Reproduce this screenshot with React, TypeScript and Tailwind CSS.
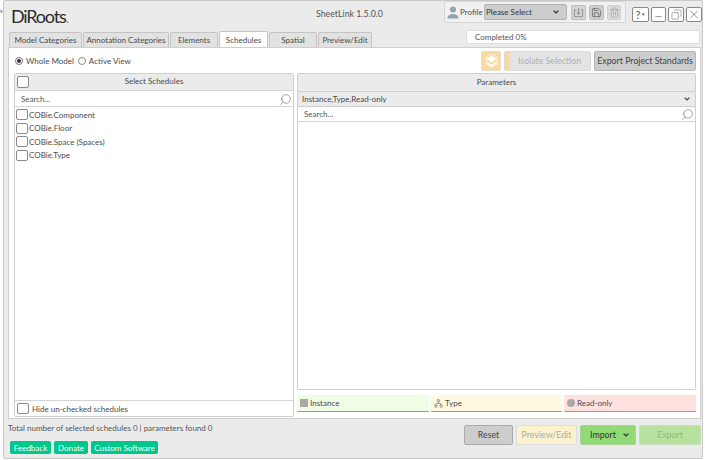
import { ChevronDown, Search, Trash2, Save, X, Minus, Copy, Network } from "lucide-react";

const font = { fontFamily: '"Lato", "Open Sans", sans-serif' };

function Check({ size = "w-3 h-3" }: { size?: string }) {
  return <span className={`${size} shrink-0 rounded-[2px] border border-[#8a8a8a] bg-white`} />;
}

function SearchRow({ className }: { className: string }) {
  return (
    <div className={`flex items-center justify-between border-b border-[#d4d4d4] bg-white pl-[6px] pr-[1px] text-[8px] text-[#555] ${className}`}>
      <span>Search...</span>
      <Search className="w-[13px] h-[13px] -scale-x-100 text-[#555]" strokeWidth={1} />
    </div>
  );
}

const tabs = [
  { name: "Model Categories", w: "w-[73px]" },
  { name: "Annotation Categories", w: "w-[86px]" },
  { name: "Elements", w: "w-[48px]" },
  { name: "Schedules", w: "w-[49px]", active: true },
  { name: "Spatial", w: "w-[48px]" },
  { name: "Preview/Edit", w: "w-[54px]" },
];

const schedules = ["COBie.Component", "COBie.Floor", "COBie.Space (Spaces)", "COBie.Type"];

const links = [
  { name: "Feedback", w: "w-[41px]" },
  { name: "Donate", w: "w-[34px]" },
  { name: "Custom Software", w: "w-[67px]" },
];

export default function App() {
  return (
    <div className="relative w-[705px] h-[460px] bg-white pl-[3px] pr-[2px] pb-[1px] overflow-hidden text-[#4a4a4a]" style={font}>
      <span className="absolute left-0 top-[8px] text-[5px] leading-[6px] text-[#333]">v</span>
      <div className="h-full bg-[#ebebeb] border border-[#c9c9c9] rounded-[2px] pl-[4px] pr-[1px] flex flex-col">
        {/* Header */}
        <div className="h-[30px] flex items-start relative">
          <div className="w-[80px] pt-[4px] pl-[3px] text-[18px] leading-[22px] text-[#2b2b2b] tracking-[-1.2px]">
            DiRoots<span className="text-[#e8a020]">.</span>
          </div>
          <div className="absolute left-[308px] top-[7px] text-[8.8px] leading-[12px] text-[#555]">SheetLink 1.5.0.0</div>
          <div className="ml-auto -mr-px flex items-start">
            <div className="w-[182px] h-[22px] bg-[#f1f1f1] border border-[#d6d6d6] rounded-[2px] flex items-center pl-[2px]">
              <svg viewBox="0 0 12 13" className="w-[12px] h-[13px]">
                <circle cx="6" cy="3.6" r="3" fill="#8fa3b5" />
                <path d="M0.5 12.5c0-3 2-4.6 5.5-4.6s5.500 1.600 5.500 4.600z" fill="#8fa3b5" />
              </svg>
              <span className="text-[8px] w-[25px] pl-[1px]">Profile</span>
              <div className="w-[83px] h-[16px] bg-[#cdcdcd] border border-[#b3b3b3] rounded-[2px] flex items-center justify-between px-[1px] text-[8px] text-[#333]">
                <span>Please Select</span>
                <ChevronDown className="w-[8px] h-[8px] mr-[5px]" strokeWidth={3.500} />
              </div>
              <div className="ml-[4px] flex gap-[3px]">
                <span className="w-[15px] h-[15px] bg-[#d5d5d5] border border-[#bdbdbd] rounded-[2px] flex items-center justify-center">
                  <svg viewBox="0 0 12 12" className="w-[11px] h-[11px]" fill="none" stroke="#777" strokeWidth="0.8">
                    <path d="M3.500 3H1.500V10.500H10.500V3H8.500M6 1V8M4 6L6 8L8 6" />
                  </svg>
                </span>
                <span className="w-[15px] h-[15px] bg-[#d0d0d0] border border-[#bdbdbd] rounded-[2px] flex items-center justify-center"><Save className="w-[11px] h-[11px] text-[#555]" strokeWidth={1.5} /></span>
                <span className="w-[14px] h-[15px] bg-[#dcdcdc] border border-[#cfcfcf] rounded-[2px] flex items-center justify-center"><Trash2 className="w-[11px] h-[11px] text-[#aaa]" strokeWidth={1.8} /></span>
              </div>
            </div>
            <div className="ml-[6px] mt-[6px] flex gap-[2px]">
              <span className="w-[17px] h-[15px] bg-white border border-[#888] rounded-[2px] flex items-center justify-center text-[11px] leading-none text-[#555]">?<span className="text-[5px] ml-[2px]">▾</span></span>
              <span className="w-[15px] h-[15px] bg-white border border-[#888] rounded-[2px] flex items-end justify-center"><Minus className="w-[9px] h-[9px]" strokeWidth={1.5} /></span>
              <span className="w-[16px] h-[15px] bg-white border border-[#888] rounded-[2px] flex items-center justify-center"><Copy className="w-[11px] h-[11px] -scale-x-100" strokeWidth={1} /></span>
              <span className="w-[16px] h-[15px] bg-white border border-[#888] rounded-[2px] flex items-center justify-center"><X className="w-[15px] h-[15px]" strokeWidth={1} /></span>
            </div>
          </div>
        </div>
        {/* Tabs + progress */}
        <div className="h-[16px] flex items-end relative">
          <div className="flex pl-[1px] gap-[1px] items-end">
            {tabs.map((t) => (
              <div
                key={t.name}
                className={`${t.w} rounded-t-[2px] border border-b-0 border-[#c4c4c4] flex items-center justify-center text-[8px] whitespace-nowrap ${
                  t.active ? "h-[16px] bg-white" : "h-[15px] bg-[#e2e2e2]"
                }`}
              >
                {t.name}
              </div>
            ))}
          </div>
          <div className="ml-auto mr-[1px] mb-[3px] w-[234px] h-[14px] bg-white rounded-[2px] border border-[#dedede] pl-[8px] flex items-center text-[8px] text-[#555]">
            Completed 0%
          </div>
        </div>
        {/* Content */}
        <div className="h-[372px] bg-white border border-[#cfcfcf] flex flex-col pl-[5px] pr-[4px]">
          <div className="h-[25px] flex items-center">
            <span className="ml-[1px] w-[8px] h-[8px] rounded-full border border-[#777] flex items-center justify-center mr-[3px]"><span className="w-[4px] h-[4px] rounded-full bg-[#333]" /></span>
            <span className="text-[8px] mr-[4px]">Whole Model</span>
            <span className="w-[8px] h-[8px] rounded-full border border-[#888] mr-[3px]" />
            <span className="text-[8px]">Active View</span>
            <div className="ml-auto flex items-center gap-[3px]">
              <span className="w-[20px] h-[20px] bg-[#f9d9a0] border border-[#e8e0c8] rounded-[2px] flex items-center justify-center">
                <svg viewBox="0 0 16 16" className="w-[15px] h-[15px]">
                  <path d="M8 1 14 4.500V11.500L8 15 2 11.500V4.500Z" fill="none" stroke="#fff" strokeWidth="0.8" />
                  <path d="M8 3 13.500 6.500 8 10 2.500 6.500Z" fill="#fff" />
                  <path d="M2.500 9 8 12.500 13.500 9V11L8 14.500 2.500 11Z" fill="#fff" />
                </svg>
              </span>
              <div className="w-[87px] h-[20px] bg-[#e4e4e4] border border-[#dadada] rounded-[2px] flex items-center text-[8.800px] text-[#b0b0b0] whitespace-nowrap">
                <span className="w-[5px] h-full bg-[#f9d9a0] mr-[8px]" />
                Isolate Selection
              </div>
              <div className="w-[102px] h-[20px] bg-[#cdcdcd] border border-[#b5b5b5] rounded-[2px] flex items-center justify-center text-[8.800px] text-[#444] whitespace-nowrap">
                Export Project Standards
              </div>
            </div>
          </div>
          <div className="h-[345px] flex gap-[3px]">
            {/* Left panel */}
            <div className="w-[280px] h-[344px] border border-[#cfcfcf] rounded-[2px] flex flex-col">
              <div className="h-[17px] pb-[2px] bg-[#ebebeb] border-b border-[#d4d4d4] relative flex items-center justify-center text-[8px]">
                <span className="absolute left-[2px] top-[2px]"><Check size="w-[12px] h-[12px] block" /></span>
                Select Schedules
              </div>
              <SearchRow className="h-[16px] pt-[1px]" />
              <div className="flex-1 bg-white pt-[1px] pl-[1px]">
                {schedules.map((s) => (
                  <div key={s} className="h-[13.500px] flex items-center gap-[1px] text-[8px]">
                    <Check size="w-[12px] h-[11px]" />
                    {s}
                  </div>
                ))}
              </div>
              <div className="h-[16px] border-t border-[#d4d4d4] flex items-center pl-[2px] gap-[3px] text-[8px]">
                <Check size="w-[12px] h-[11px]" />
                Hide un-checked schedules
              </div>
            </div>
            {/* Right panel */}
            <div className="flex-1 flex flex-col">
              <div className="h-[19px] pb-[2px] bg-[#ebebeb] border border-[#cfcfcf] rounded-t-[2px] flex items-center justify-center text-[8px]">Parameters</div>
              <div className="h-[15px] bg-[#ebebeb] border-x border-b border-[#cfcfcf] flex items-center justify-between pl-[4px] pr-[4px] text-[8px]">
                <span>Instance,Type,Read-only</span>
                <ChevronDown className="w-[8px] h-[8px]" strokeWidth={3.500} />
              </div>
              <SearchRow className="h-[15px] border-x border-x-[#cfcfcf]" />
              <div className="h-[268px] bg-white border-x border-b border-[#cfcfcf] rounded-b-[2px]" />
              <div className="mt-[5px] flex gap-[2px] h-[17px]">
                <div className="w-[132px] bg-[#f0fde4] border-b border-[#999] rounded-[1px] flex items-center pl-[3px] gap-[2px] text-[8px]">
                  <span className="w-[8px] h-[8px] bg-[#a8a8a8]" />
                  Instance
                </div>
                <div className="w-[131px] bg-[#fff9e0] border-b border-[#999] rounded-[1px] flex items-center pl-[3px] gap-[2px] text-[8px]">
                  <Network className="w-[9px] h-[9px] text-[#888]" strokeWidth={2} />
                  Type
                </div>
                <div className="flex-1 bg-[#ffe2df] border-b border-[#999] rounded-[1px] flex items-center pl-[3px] gap-[2px] text-[8px]">
                  <span className="w-[8px] h-[8px] rounded-full bg-[#a8a8a8]" />
                  Read-only
                </div>
              </div>
            </div>
          </div>
        </div>
        {/* Footer */}
        <div className="flex-1 flex justify-between">
          <div>
            <div className="pt-[3px] text-[8px] leading-[12px] text-[#555]">Total number of selected schedules 0 | parameters found 0</div>
            <div className="mt-[7px] ml-[2px] flex gap-[3px]">
              {links.map((b) => (
                <span key={b.name} className={`${b.w} h-[13px] bg-[#00c78c] rounded-[2px] flex items-center justify-center text-[8px] text-white whitespace-nowrap`}>{b.name}</span>
              ))}
            </div>
          </div>
          <div className="pt-[6px] flex items-start gap-[3px]">
            <span className="w-[49px] h-[20px] bg-[#cdcdcd] border border-[#aaa] rounded-[2px] flex items-center justify-center text-[8.800px] text-[#444]">Reset</span>
            <span className="w-[61px] h-[20px] bg-[#fbf2cf] border border-[#ddd] rounded-[2px] flex items-center justify-center text-[8.800px] text-[#aaa]">Preview/Edit</span>
            <span className="w-[56px] h-[20px] bg-[#92d977] border border-[#a5d494] rounded-[2px] flex items-center justify-center gap-[6px] pl-[4px] text-[8.800px] text-[#333]">Import<ChevronDown className="w-[8px] h-[8px]" strokeWidth={3.500} /></span>
            <span className="w-[62px] h-[20px] bg-[#b6e29e] border border-[#cadfc0] rounded-[2px] flex items-center justify-center text-[8.800px] text-[#8fb884]">Export</span>
          </div>
        </div>
      </div>
    </div>
  );
}
